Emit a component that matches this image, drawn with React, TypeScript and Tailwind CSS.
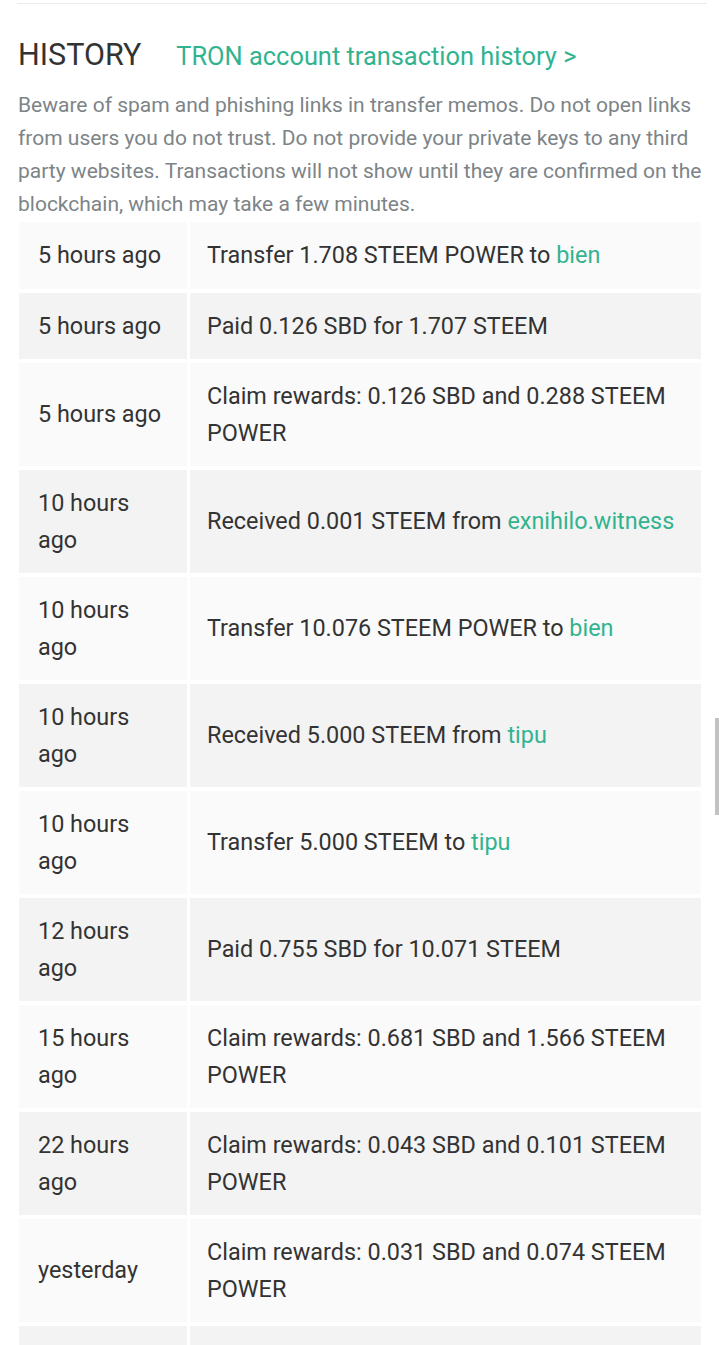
import React from 'react';

type Row = {
    when: string;
    text: string;
    link?: string;
};

const rows: Row[] = [
    { when: '5 hours ago', text: 'Transfer 1.708 STEEM POWER to ', link: 'bien' },
    { when: '5 hours ago', text: 'Paid 0.126 SBD for 1.707 STEEM' },
    { when: '5 hours ago', text: 'Claim rewards: 0.126 SBD and 0.288 STEEM POWER' },
    { when: '10 hours ago', text: 'Received 0.001 STEEM from ', link: 'exnihilo.witness' },
    { when: '10 hours ago', text: 'Transfer 10.076 STEEM POWER to ', link: 'bien' },
    { when: '10 hours ago', text: 'Received 5.000 STEEM from ', link: 'tipu' },
    { when: '10 hours ago', text: 'Transfer 5.000 STEEM to ', link: 'tipu' },
    { when: '12 hours ago', text: 'Paid 0.755 SBD for 10.071 STEEM' },
    { when: '15 hours ago', text: 'Claim rewards: 0.681 SBD and 1.566 STEEM POWER' },
    { when: '22 hours ago', text: 'Claim rewards: 0.043 SBD and 0.101 STEEM POWER' },
    { when: 'yesterday', text: 'Claim rewards: 0.031 SBD and 0.074 STEEM POWER' },
];

export default function App() {
    return (
        <div className="relative w-[719px] bg-white pt-[3px] font-['Roboto',sans-serif] text-[#333]">
            <div className="ml-[17px] w-[690px] border-t border-[#ececec]" />

            <div className="mt-[33px] ml-[18px] flex items-baseline gap-[35px]">
                <h2 className="text-[30.5px] leading-[36px] text-[#333]">HISTORY</h2>
                <a className="text-[25.4px] leading-[36px] text-[#31b38f]">TRON account transaction history &gt;</a>
            </div>

            <p className="mt-[15px] ml-[18px] w-[690px] text-[21px] leading-[33px] text-[#7d8487]">
                Beware of spam and phishing links in transfer memos. Do not open links from users you do not trust. Do not provide your private keys to any third party websites. Transactions will not show until they are confirmed on the blockchain, which may take a few minutes.
            </p>

            <div className="mt-[1px] ml-[19px] grid w-[682px] grid-cols-[168px_1fr] gap-x-[3px] gap-y-[4px] text-[23.4px] leading-[36.5px]">
                {rows.map((r, i) => {
                    const bg = i % 2 === 0 ? 'bg-[#fafafa]' : 'bg-[#f3f3f3]';
                    return (
                        <React.Fragment key={i}>
                            <div className={`${bg} flex items-center py-[15px] pl-[19px] pr-[20px]`}>{r.when}</div>
                            <div className={`${bg} flex items-center py-[15px] pl-[17px] pr-3`}>
                                <span>
                                    {r.text}
                                    {r.link && <span className="text-[#31b38f]">{r.link}</span>}
                                </span>
                            </div>
                        </React.Fragment>
                    );
                })}
                {/* next row, cut off by the bottom of the screen */}
                <div className="h-[68px] bg-[#f3f3f3]" />
                <div className="h-[68px] bg-[#f3f3f3]" />
            </div>

            {/* scroll indicator */}
            <div className="absolute top-[718px] left-[715px] h-[97px] w-[4px] bg-[#c2c2c2]" />
        </div>
    );
}
